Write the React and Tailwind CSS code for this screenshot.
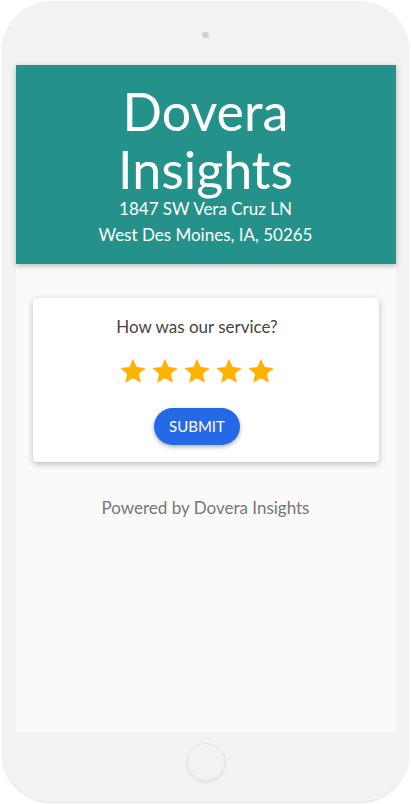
import { useState } from "react";

function Star({ filled }) {
    return (
        <svg viewBox="0 0 24 24" className="w-[30px] h-[30px]">
            <path
                d="M12 2.2l2.95 6.6 7.2.7-5.45 4.8 1.6 7.05L12 17.7l-6.3 3.65 1.6-7.05L1.85 9.5l7.2-.7z"
                fill={filled ? "#ffb300" : "#e0e0e0"}
            />
        </svg>
    );
}

export default function App() {
    const [rating, setRating] = useState(5);

    return (
        <div className="w-[411px] h-[804px] bg-white pt-[1px] pl-[2px] font-['Lato',sans-serif]">
            <div className="w-[407px] h-[801px] rounded-[50px] bg-[#f2f2f2] shadow-[0_1px_2px_rgba(0,0,0,0.12)] flex flex-col items-center">
                <div className="h-[64px] flex items-start justify-center pt-[31px]">
                    <div className="w-[7px] h-[6px] rounded-full bg-[#d0d0d0]" />
                </div>

                <div className="w-[380px] h-[667px] bg-[#fafafa] flex flex-col">
                    <div className="bg-[#24928a] h-[199px] shadow-[0_2px_5px_rgba(0,0,0,0.25)] flex flex-col items-center text-white pt-[17px]">
                        <div className="text-[52px] leading-[58px] text-center">
                            Dovera
                            <br />
                            Insights
                        </div>
                        <div className="text-[17px] leading-[26px] text-center mt-[-2px]">
                            1847 SW Vera Cruz LN
                            <br />
                            West Des Moines, IA, 50265
                        </div>
                    </div>

                    <div className="mx-[17px] mt-[34px] bg-white rounded-[4px] shadow-[0_2px_6px_rgba(0,0,0,0.25)] h-[164px] flex flex-col items-center pt-[18px] pr-[17px]">
                        <div className="text-[17px] text-[#444] leading-[22px]">How was our service?</div>
                        <div className="flex gap-[2px] mt-[18px]">
                            {[1, 2, 3, 4, 5].map((n) => (
                                <button key={n} type="button" onClick={() => setRating(n)}>
                                    <Star filled={n <= rating} />
                                </button>
                            ))}
                        </div>
                        <button
                            type="button"
                            className="mt-[22px] w-[86px] h-[37px] rounded-full bg-[#2469e6] text-white text-[15px] shadow-[0_2px_4px_rgba(0,0,0,0.3)]"
                        >
                            SUBMIT
                        </button>
                    </div>

                    <div className="mt-[33px] text-center text-[17px] text-[#777]">
                        Powered by Dovera Insights
                    </div>
                </div>

                <div className="mt-[11px] w-[40px] h-[40px] rounded-full bg-[#f2f2f2] border border-[#e2e2e2] shadow-[inset_0_-2px_2px_rgba(0,0,0,0.06)]" />
            </div>
        </div>
    );
}
